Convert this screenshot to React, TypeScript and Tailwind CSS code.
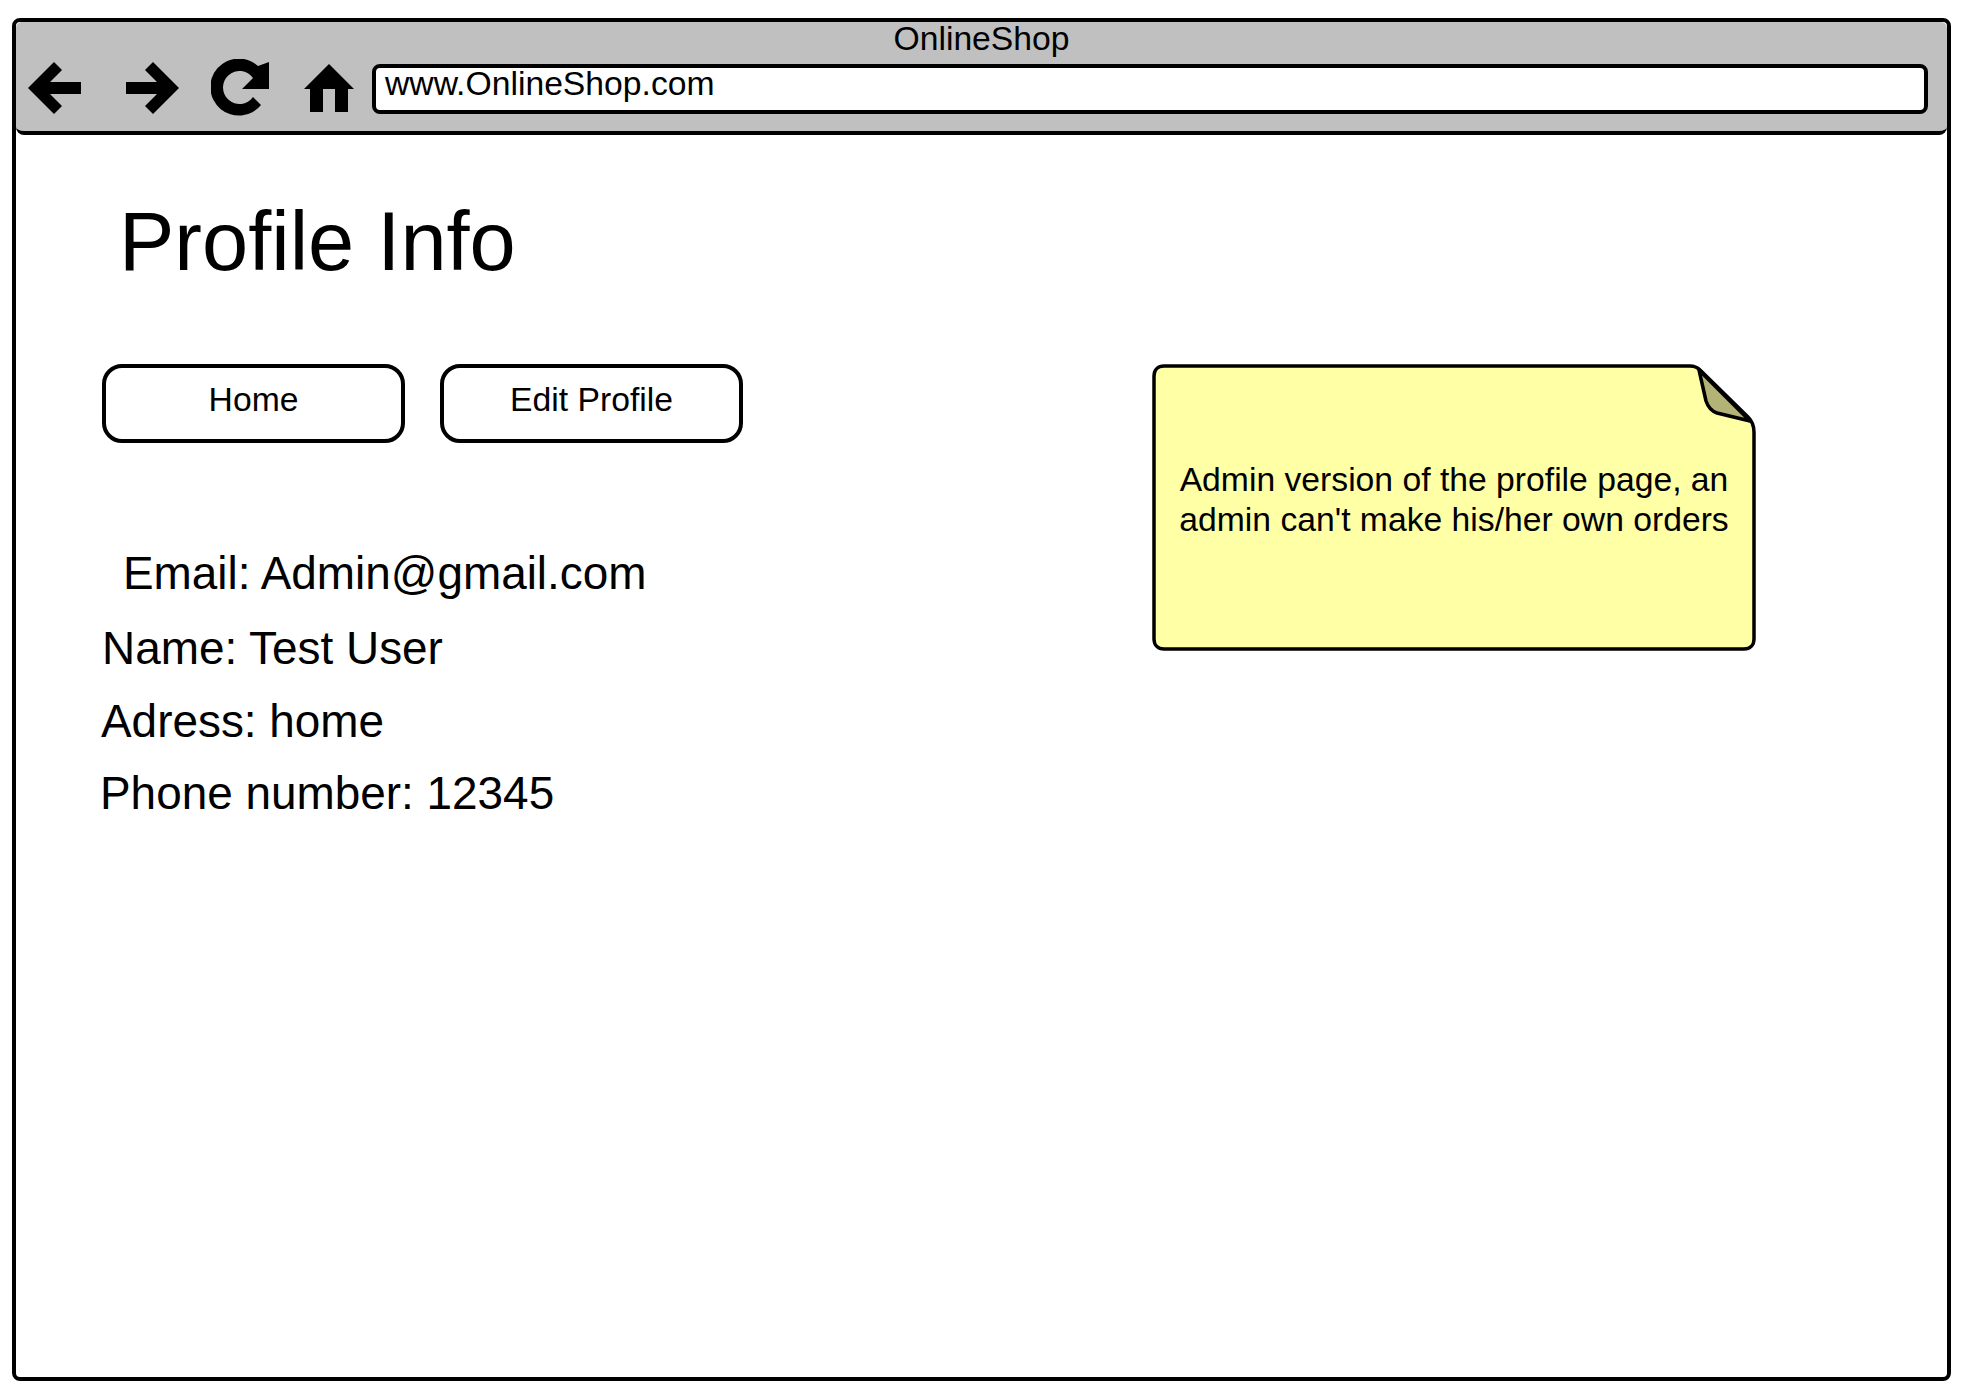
import React from "react";

const BackIcon = () => (
  <svg width="53" height="52" viewBox="0 0 53 52" className="shrink-0">
    <path d="M0 26 26 0l8 8-12 12h31v12H22l12 12-8 8z" fill="#000" />
  </svg>
);

const ForwardIcon = () => (
  <svg width="53" height="52" viewBox="0 0 53 52" className="shrink-0">
    <path d="M53 26 27 0l-8 8 12 12H0v12h31L19 44l8 8z" fill="#000" />
  </svg>
);

const ReloadIcon = () => (
  <svg width="58" height="58" viewBox="0 0 58 58" className="shrink-0">
    <path
      d="M50 46A28.500 28.500 0 1 1 47 7L58 3V30H31L42 19A16.500 16.500 0 1 0 42 38Z"
      fill="#000"
    />
  </svg>
);

const HomeIcon = () => (
  <svg width="50" height="48" viewBox="0 0 50 48" className="shrink-0">
    <path d="M25 0 50 25H44V48H31V25H19V48H6V25H0z" fill="#000" />
  </svg>
);

const BrowserBar = () => (
  <div className="h-[113px] bg-[#c0c0c0] border-b-4 border-black rounded-b-lg rounded-t-md flex flex-col">
    <div className="h-[35px] text-center text-[33.7px] leading-[33px]">OnlineShop</div>
    <div className="flex items-center pl-[12px] pt-[2px]">
      <BackIcon />
      <div className="w-[45px]" />
      <ForwardIcon />
      <div className="w-[32px]" />
      <ReloadIcon />
      <div className="w-[35px]" />
      <HomeIcon />
      <div className="w-[18px]" />
      <div className="w-[1556px] h-[50px] self-start mt-[5px] bg-white border-4 border-black rounded-lg text-[33.7px] leading-[30px] pl-[9px]">
        www.OnlineShop.com
      </div>
    </div>
  </div>
);

const Button = ({ label }: { label: string }) => (
  <div className="w-[303px] h-[79px] bg-white border-4 border-black rounded-[20px] text-center text-[33.7px] leading-[62px]">
    {label}
  </div>
);

const StickyNote = () => (
  <div className="relative w-[604px] h-[288px] flex items-center justify-center">
    <svg width="604" height="288" viewBox="0 0 604 288" className="absolute inset-0">
      <path
        d="M12 2H538C543 2 546 4 548 6L596 53C600 57 602 62 602 68V275C602 281 598 285 592 285H12C6 285 2 281 2 275V12C2 6 6 2 12 2Z"
        fill="#ffffa6"
        stroke="#000"
        strokeWidth="3.500"
      />
      <path
        d="M547 6 554 37C556 43 559 47 565 49L598 57Z"
        fill="#b3b377"
        stroke="#000"
        strokeWidth="3.500"
        strokeLinejoin="round"
      />
    </svg>
    <div className="relative text-[33.7px] leading-[40px] text-center pb-[18px] whitespace-nowrap">
      Admin version of the profile page, an
      <br />
      admin can't make his/her own orders
    </div>
  </div>
);

const App = () => {
  return (
    <div className="w-[1965px] h-[1393px] bg-white text-black font-['Liberation_Sans',sans-serif] pl-[12px] pt-[18px]">
      <div className="w-[1939px] h-[1363px] border-4 border-black rounded-lg">
        <BrowserBar />
        <div className="text-[83px] leading-[96px] pl-[103px] pt-[59px]">Profile Info</div>
        <div className="flex pl-[86px] pt-[74px]">
          <div className="w-[1050px]">
            <div className="flex gap-[35px]">
              <Button label="Home" />
              <Button label="Edit Profile" />
            </div>
            <div className="text-[45.9px] leading-[50px] pt-[105px]">
              <div className="pl-[21px]">Email: Admin@gmail.com</div>
              <div className="pt-[25px]">Name: Test User</div>
              <div className="pt-[23px] -ml-px">Adress: home</div>
              <div className="pt-[22px] -ml-[2px]">Phone number: 12345</div>
            </div>
          </div>
          <StickyNote />
        </div>
      </div>
    </div>
  );
};

export default App;
